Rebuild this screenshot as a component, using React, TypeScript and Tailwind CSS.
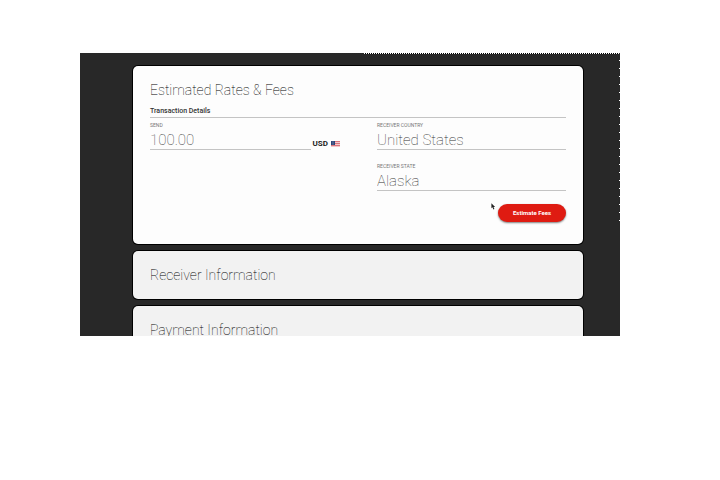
import { useState } from "react";
import type { ReactNode } from "react";

type FieldProps = {
  id: string;
  label: string;
  value: string;
  onChange: (value: string) => void;
};

function Field({ id, label, value, onChange }: FieldProps) {
  return (
    <div className="flex min-w-0 flex-1 flex-col">
      <label htmlFor={id} className="text-[5px] leading-[6px] uppercase text-[#777]">
        {label}
      </label>
      <input
        id={id}
        type="text"
        value={value}
        onChange={(e) => onChange(e.target.value)}
        className="h-[22px] w-full border-b border-[#c4c4c4] bg-transparent pt-[2px] text-[15px] leading-[18px] font-thin text-[#333] outline-none"
      />
    </div>
  );
}

function Card({ title, open, children }: { title: string; open?: boolean; children?: ReactNode }) {
  return (
    <section
      className={
        "rounded-[5px] px-[17px] shadow-[0_0_0_1px_#000] " + (open ? "bg-[#fdfdfd] pt-4 pb-[22px]" : "bg-[#f2f2f2] py-4")
      }
    >
      <h2 className="text-[14px] leading-4 font-thin text-black">{title}</h2>
      {children}
    </section>
  );
}

function UsFlag() {
  return (
    <svg viewBox="0 0 9 6" className="h-[6px] w-[9px]" aria-hidden="true">
      <rect width="9" height="6" fill="#f3c9cb" />
      <path d="M0 .5h9M0 2.5h9M0 4.5h9" stroke="#d9747c" strokeWidth="1" />
      <rect width="4" height="4" fill="#2c4478" />
      <path d="M1 1h.5M2.5 1H3M1.7 2h.5M1 3h.5M2.5 3H3" stroke="#d5dcec" strokeWidth=".5" />
    </svg>
  );
}

export default function App() {
  const [amount, setAmount] = useState("100.00");
  const [country, setCountry] = useState("United States");
  const [region, setRegion] = useState("Alaska");

  return (
    <main className="min-h-screen bg-white pt-[53px] pr-[100px] pl-[80px] font-['Roboto',sans-serif]">
      <div className="relative h-[283px] overflow-hidden bg-[#282828] pt-[13px] pr-[37px] pl-[53px]">
        {/* perforated top and right edges */}
        <div className="absolute top-0 right-0 h-px w-64 bg-[repeating-linear-gradient(90deg,#fff_0_1px,#000_1px_2px)]" />
        <div className="absolute top-0 right-0 h-[168px] w-px bg-[repeating-linear-gradient(180deg,#282828_0_7px,#fff_7px_8px)]" />

        <div className="flex flex-col gap-[7px]">
          <Card title="Estimated Rates & Fees" open>
            <h3 className="mt-[8px] border-b border-[#c4c4c4] pt-px pb-px text-[7px] leading-[9px] font-medium text-[#333]">
              Transaction Details
            </h3>
            <form onSubmit={(e) => e.preventDefault()}>
              <div className="mt-[4px] grid grid-cols-[190px_1fr] gap-x-[37px]">
                <div className="flex items-start">
                  <Field id="send" label="Send" value={amount} onChange={setAmount} />
                  <div className="mt-[17px] flex items-center gap-[3px] pl-[2px] text-[8px] leading-[10px] font-bold text-[#222]">
                    <span>USD</span>
                    <UsFlag />
                  </div>
                </div>
                <div className="flex flex-col gap-[13px]">
                  <Field id="country" label="Receiver Country" value={country} onChange={setCountry} />
                  <Field id="state" label="Receiver State" value={region} onChange={setRegion} />
                </div>
              </div>
              <div className="mt-[13px] flex justify-end">
                <button
                  type="submit"
                  className="h-[18px] w-[68px] rounded-full bg-[#df1b12] pb-px text-[6px] font-bold text-white shadow-[0_1px_2px_rgba(0,0,0,0.5)]"
                >
                  Estimate Fees
                </button>
              </div>
            </form>
          </Card>
          <Card title="Receiver Information" />
          <Card title="Payment Information" />
        </div>

        {/* pointer */}
        <svg viewBox="0 0 5 7" className="absolute top-[150px] right-[124px] h-[7px] w-[5px]" aria-hidden="true">
          <path d="M.4.3v4.9l1.1-1 .9 2.2 1-.4-.9-2.1h1.6z" fill="#222" />
        </svg>
      </div>
    </main>
  );
}
